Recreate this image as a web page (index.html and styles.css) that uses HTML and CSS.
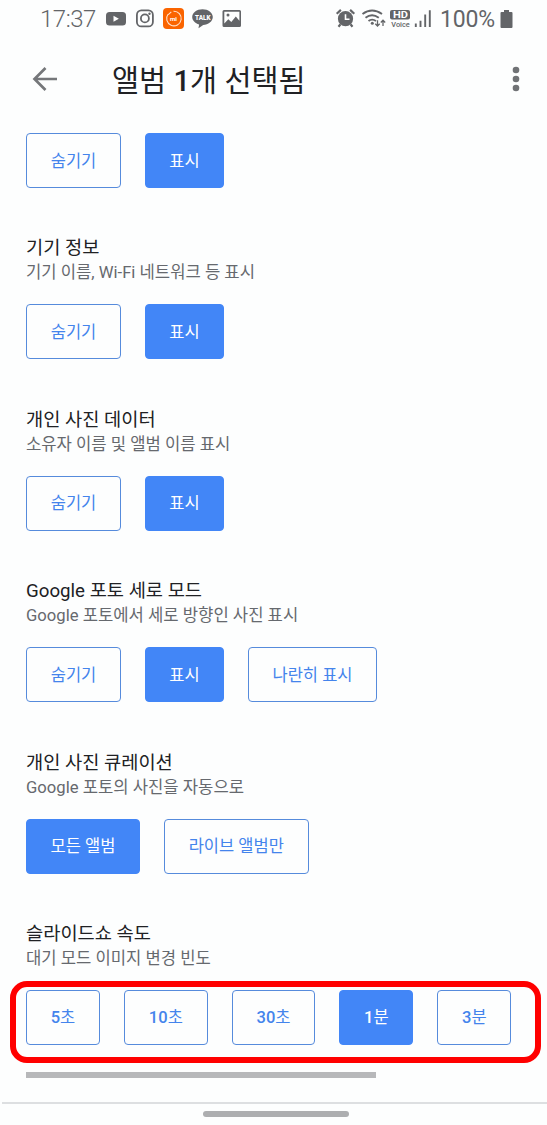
FILE: index.html
```html
<!DOCTYPE html>
<html lang="ko">
<head>
<meta charset="utf-8">
<title>앨범 1개 선택됨</title>
<link rel="stylesheet" href="styles.css">
</head>
<body>
<div class="screen">
  <header class="status">
    <span class="clock">17:37</span>
    <svg class="status-left" width="140" height="24" viewBox="104 7 140 24">
      <rect x="106" y="12" width="20" height="13.500" rx="3.5" fill="#636568"/>
      <path d="M113.5 15.7v6l5.400-3z" fill="#fff"/>
      <g fill="none" stroke="#636568" stroke-width="1.8"><rect x="136.900" y="10.400" width="16" height="16" rx="4.500"/><circle cx="144.900" cy="18.400" r="4"/></g>
      <circle cx="149.500" cy="13.800" r="1.200" fill="#636568"/>
      <rect x="163" y="8" width="21" height="21" rx="4" fill="#fa6400"/>
      <path d="M168 14.200A7.300 7.300 0 1 0 173.500 11.200M168.300 14.600l3-2.800" fill="none" stroke="#ffe3cf" stroke-width="1.100"/>
      <text x="170" y="20.800" class="mi" textLength="7" lengthAdjust="spacingAndGlyphs">mi</text>
      <path d="M202.500 9.200c5.700 0 10.300 3.500 10.300 7.900s-4.600 7.800-9.600 7.900l-4.700 3.200.6-3.700c-4-1.100-6.900-4-6.900-7.400 0-4.400 4.600-7.900 10.300-7.900z" fill="#636568"/>
      <text x="195" y="19.600" class="talk" textLength="15.500" lengthAdjust="spacingAndGlyphs">TALK</text>
      <path fill-rule="evenodd" d="M224 10h15.500q1.500 0 1.500 1.500v14q0 1.500-1.500 1.500H224q-1.500 0-1.500-1.500v-14q0-1.500 1.500-1.500zM224.300 11.800V23.500l4-4.300 3 2.700 4.500-5.500 3.600 4.300v-8.900z" fill="#636568"/>
      <circle cx="228" cy="15" r="1.500" fill="#636568"/>
    </svg>
    <svg class="status-right" width="100" height="24" viewBox="334 7 100 24">
      <circle cx="345.500" cy="18.700" r="7.600" fill="#636568"/>
      <path d="M336.700 13.700l4.200-3.800M354.300 13.700l-4.200-3.800M340.500 24.200l-2 2.500M350.500 24.200l2 2.500" stroke="#636568" stroke-width="2.200"/>
      <path d="M345.500 14.200v5h4" fill="none" stroke="#fff" stroke-width="1.600"/>
      <g fill="none" stroke="#636568" stroke-width="1.900"><path d="M362.500 14q9.500-7 19.500 0M365.500 17.700q6.500-5 13.300 0M368.500 21q3.500-2.700 7.500 0"/></g>
      <circle cx="372.300" cy="23.300" r="1.500" fill="#636568"/>
      <path d="M377.500 20.200v5.800m-2.200-2.300l2.200 2.300 2.200-2.300M383 26v-5.800m-2.200 2.300l2.200-2.300 2.200 2.300" fill="none" stroke="#636568" stroke-width="1.300"/>
      <rect x="390" y="10" width="20" height="9.500" rx="2" fill="#636568"/>
      <text x="393" y="17.900" class="hd" textLength="15" lengthAdjust="spacingAndGlyphs">HD</text>
      <text x="391.300" y="26.600" class="voice" textLength="18.500" lengthAdjust="spacingAndGlyphs">Voice</text>
      <path d="M415.800 27v-3.500M420.500 27v-6.200M425.200 27V14.500M429.800 27V10.200" stroke="#636568" stroke-width="1.900"/>
    </svg>
    <span class="percent">100%</span>
    <svg class="battery" width="13" height="19" viewBox="0 0 13 19"><path d="M4 0h5v2h2.500q1 0 1 1v14q0 1-1 1h-10q-1 0-1-1V3q0-1 1-1H4z" fill="#636568"/></svg>
  </header>

  <div class="appbar">
    <svg class="back" width="28" height="28" viewBox="0 0 28 28"><path d="M26 14H3.500M14.500 3L3.500 14l11 11" fill="none" stroke="#75777a" stroke-width="2.700"/></svg>
    <h1>앨범 <span class="num">1</span>개 선택됨</h1>
    <svg class="more" width="8" height="26" viewBox="0 0 8 26" fill="#707275"><circle cx="4" cy="4" r="3.300"/><circle cx="4" cy="13" r="3.300"/><circle cx="4" cy="22" r="3.300"/></svg>
  </div>

  <main>
    <section class="first">
      <div class="options"><button class="w-hide">숨기기</button><button class="w-show on">표시</button></div>
    </section>
    <section>
      <h2>기기 정보</h2><p>기기 이름, Wi-Fi 네트워크 등 표시</p>
      <div class="options"><button class="w-hide">숨기기</button><button class="w-show on">표시</button></div>
    </section>
    <section>
      <h2>개인 사진 데이터</h2><p>소유자 이름 및 앨범 이름 표시</p>
      <div class="options"><button class="w-hide">숨기기</button><button class="w-show on">표시</button></div>
    </section>
    <section>
      <h2>Google 포토 세로 모드</h2><p>Google 포토에서 세로 방향인 사진 표시</p>
      <div class="options"><button class="w-hide">숨기기</button><button class="w-show on">표시</button><button class="w-side">나란히 표시</button></div>
    </section>
    <section>
      <h2>개인 사진 큐레이션</h2><p>Google 포토의 사진을 자동으로</p>
      <div class="options"><button class="w-all on">모든 앨범</button><button class="w-live">라이브 앨범만</button></div>
    </section>
    <section>
      <h2>슬라이드쇼 속도</h2><p>대기 모드 이미지 변경 빈도</p>
      <div class="options speed"><button class="w-short"><span class="num">5</span>초</button><button class="w-long"><span class="num">10</span>초</button><button class="w-long"><span class="num">30</span>초</button><button class="w-short on"><span class="num">1</span>분</button><button class="w-short"><span class="num">3</span>분</button></div>
    </section>
    <div class="scrollbar"></div>
  </main>
  <footer><div class="home"></div></footer>
  <div class="highlight"></div>
</div>
</body>
</html>
```
FILE: styles.css
```css
* { box-sizing: border-box; }
body { margin: 0; background: #fdfefe; font-family: Roboto, "Noto Sans CJK KR", sans-serif; }
.screen { position: relative; width: 547px; height: 1125px; overflow: hidden; }
.status { display: flex; height: 38px; padding-left: 40px; align-items: center; color: #636568; font-size: 24px; }
.clock { width: 64px; font-weight: 300; letter-spacing: -0.5px; }
.status-left { flex: none; }
.status-right { flex: none; margin-left: 90px; }
.percent { width: 60px; margin-left: 6px; font-weight: 400; font-size: 23px; letter-spacing: -0.2px; }
.battery { flex: none; }
.mi { font: 700 6px Roboto, sans-serif; fill: #fff; }
.talk { font: 900 7px Roboto, sans-serif; fill: #fff; }
.hd { font: 700 9px Roboto, sans-serif; fill: #fff; }
.voice { font: 500 7.500px Roboto, sans-serif; fill: #636568; }
.num { font-weight: 500; }
.appbar { display: flex; height: 82px; padding: 0 27px 0 31px; align-items: center; }
.back { flex: none; }
h1 { flex: 1; margin: 0 0 0 53px; padding-top: 4px; font-size: 29.400px; font-weight: 400; line-height: 40px; color: #202124; white-space: nowrap; }
.more { flex: none; }
main { padding: 13px 0 0 26px; }
section { height: 171.400px; padding-top: 47.400px; }
section.first { height: 55px; padding: 0; }
h2 { margin: 0; font-size: 18.700px; font-weight: 400; line-height: 26px; color: #202124; white-space: nowrap; }
p { margin: 0; font-size: 16.650px; line-height: 24px; color: #66696e; white-space: nowrap; }
.options { display: flex; gap: 24px; margin-top: 19px; }
.first .options { margin-top: 0; }
button { flex: none; height: 55px; padding: 2px 0 0; border: 1px solid #568bdc; border-radius: 4px; background: #fdfefe; color: #4484ec; font: 400 16.500px/24px Roboto, "Noto Sans CJK KR", sans-serif; white-space: nowrap; }
button.on { background: #4286f7; border-color: #4286f7; color: #fff; }
.w-hide { width: 95px; }
.w-show { width: 79px; }
.w-side { width: 129px; }
.w-all { width: 114px; }
.w-live { width: 144.500px; }
.w-short { width: 74px; }
.w-long { width: 83.700px; }
.scrollbar { width: 350px; height: 6px; margin-top: 27px; background: #b7b8ba; }
footer { height: 23px; margin: 24px 0 0 2px; padding-top: 7px; border-top: 2px solid #dddfe1; }
.home { width: 146px; height: 6px; margin-left: 201px; border-radius: 3px; background: #adaeb0; }
.highlight { position: absolute; left: 10px; top: 981px; width: 531px; height: 82px; border: 6px solid #f00; border-radius: 17px; }
```
